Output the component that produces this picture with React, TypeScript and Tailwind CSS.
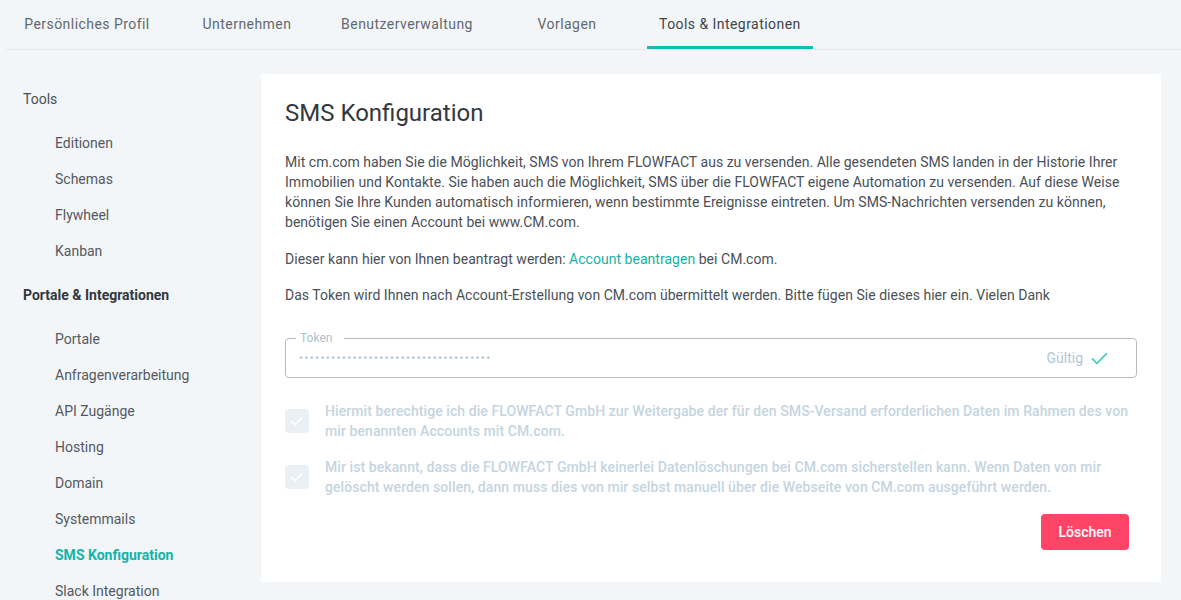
const TABS = [
  { label: "Persönliches Profil" },
  { label: "Unternehmen" },
  { label: "Benutzerverwaltung" },
  { label: "Vorlagen" },
  { label: "Tools & Integrationen", active: true },
];

const NAV = [
  { title: "Tools", items: ["Editionen", "Schemas", "Flywheel", "Kanban"], bold: false },
  {
    title: "Portale & Integrationen",
    bold: true,
    items: [
      "Portale",
      "Anfragenverarbeitung",
      "API Zugänge",
      "Hosting",
      "Domain",
      "Systemmails",
      "SMS Konfiguration",
      "Slack Integration",
    ],
  },
];

const CONSENTS = [
  "Hiermit berechtige ich die FLOWFACT GmbH zur Weitergabe der für den SMS-Versand erforderlichen Daten im Rahmen des von mir benannten Accounts mit CM.com.",
  "Mir ist bekannt, dass die FLOWFACT GmbH keinerlei Datenlöschungen bei CM.com sicherstellen kann. Wenn Daten von mir gelöscht werden sollen, dann muss dies von mir selbst manuell über die Webseite von CM.com ausgeführt werden.",
];

function Check({ className }: { className?: string }) {
  return (
    <svg viewBox="0 0 24 24" fill="none" className={className} strokeLinecap="round" strokeLinejoin="round">
      <path d="M4 12.5l5 5L20 6.5" stroke="currentColor" strokeWidth="2.2" />
    </svg>
  );
}

export default function App() {
  return (
    <div
      className="min-h-[600px] bg-[#f2f6f9] text-[#4a5057]"
      style={{ fontFamily: "Roboto, 'Noto Sans', sans-serif" }}
    >
      {/* Tabs */}
      <div className="ml-[6px] flex h-[50px] border-b border-[#e3e9ee] pl-px">
        {TABS.map((t) => (
          <div
            key={t.label}
            className={
              "flex min-w-[160px] items-center justify-center px-3 text-[14px] tracking-[0.45px] " +
              (t.active ? "border-b-[3px] border-[#13bbb1] pt-[3px] text-[#3f444a]" : "text-[#63686e]")
            }
          >
            {t.label}
          </div>
        ))}
      </div>

      <div className="flex">
        {/* Sidebar */}
        <aside className="w-[261px] shrink-0 pl-[23px] pt-[31px]">
          {NAV.map((g) => (
            <div key={g.title} className="mb-2">
              <div
                className={
                  "flex h-9 items-center text-[14px] " +
                  (g.bold ? "font-bold text-[#33383e]" : "text-[#4a5057]")
                }
              >
                {g.title}
              </div>
              <div className="mt-2">
                {g.items.map((i) => (
                  <div
                    key={i}
                    className={
                      "flex h-9 items-center pl-8 text-[14px] " +
                      (i === "SMS Konfiguration" ? "font-bold text-[#13b3a8]" : "text-[#55595f]")
                    }
                  >
                    {i}
                  </div>
                ))}
              </div>
            </div>
          ))}
        </aside>

        {/* Card */}
        <main className="mt-6 mb-[18px] w-[900px] self-start bg-white px-6 pt-6 pb-8">
          <h1 className="text-[24px] leading-[30px] text-[#33383e]">SMS Konfiguration</h1>

          <p className="mt-6 text-[14px] leading-5 tracking-[0.03px]">
            Mit cm.com haben Sie die Möglichkeit, SMS von Ihrem FLOWFACT aus zu versenden. Alle gesendeten SMS landen in der
            Historie Ihrer Immobilien und Kontakte. Sie haben auch die Möglichkeit, SMS über die FLOWFACT eigene Automation zu
            versenden. Auf diese Weise können Sie Ihre Kunden automatisch informieren, wenn bestimmte Ereignisse eintreten. Um
            SMS-Nachrichten versenden zu können, benötigen Sie einen Account bei www.CM.com.
          </p>
          <p className="mt-[17px] text-[14px] leading-5 tracking-[0.03px]">
            Dieser kann hier von Ihnen beantragt werden: <span className="text-[#13b3a8]">Account beantragen</span> bei CM.com.
          </p>
          <p className="mt-4 text-[14px] leading-5 tracking-[0.03px]">
            Das Token wird Ihnen nach Account-Erstellung von CM.com übermittelt werden. Bitte fügen Sie dieses hier ein. Vielen
            Dank
          </p>

          {/* Token field */}
          <div className="relative mt-[33px] flex h-10 items-center rounded border border-[#b8bcc0] pr-[26px] pl-[13px]">
            <span className="absolute -top-[9px] left-[10px] bg-white pr-3 pl-1 text-[12px] leading-4 text-[#adc0cf]">
              Token
            </span>
            <span className="flex-1 text-[12px] leading-none tracking-[1.3px] text-[#b9c9d5]">
              {"•".repeat(36)}
            </span>
            <span className="text-[14px] text-[#b3c6d4]">Gültig</span>
            <Check className="ml-[6px] h-[21px] w-[21px] text-[#52cfc4]" />
          </div>

          {/* Consents */}
          <div className="mt-[23px] flex flex-col gap-4">
            {CONSENTS.map((c) => (
              <div key={c} className="flex items-center gap-4">
                <div className="flex h-6 w-6 shrink-0 items-center justify-center rounded bg-[#e9f1f6]">
                  <Check className="h-4 w-4 text-white" />
                </div>
                <p className="text-[14px] leading-5 font-medium tracking-[0.08px] text-[#c4d5e1]">{c}</p>
              </div>
            ))}
          </div>

          <div className="mt-[17px] flex justify-end pr-2">
            <button className="h-9 w-[88px] rounded bg-[#ff4567] text-[14px] font-medium text-white">Löschen</button>
          </div>
        </main>
      </div>
    </div>
  );
}
